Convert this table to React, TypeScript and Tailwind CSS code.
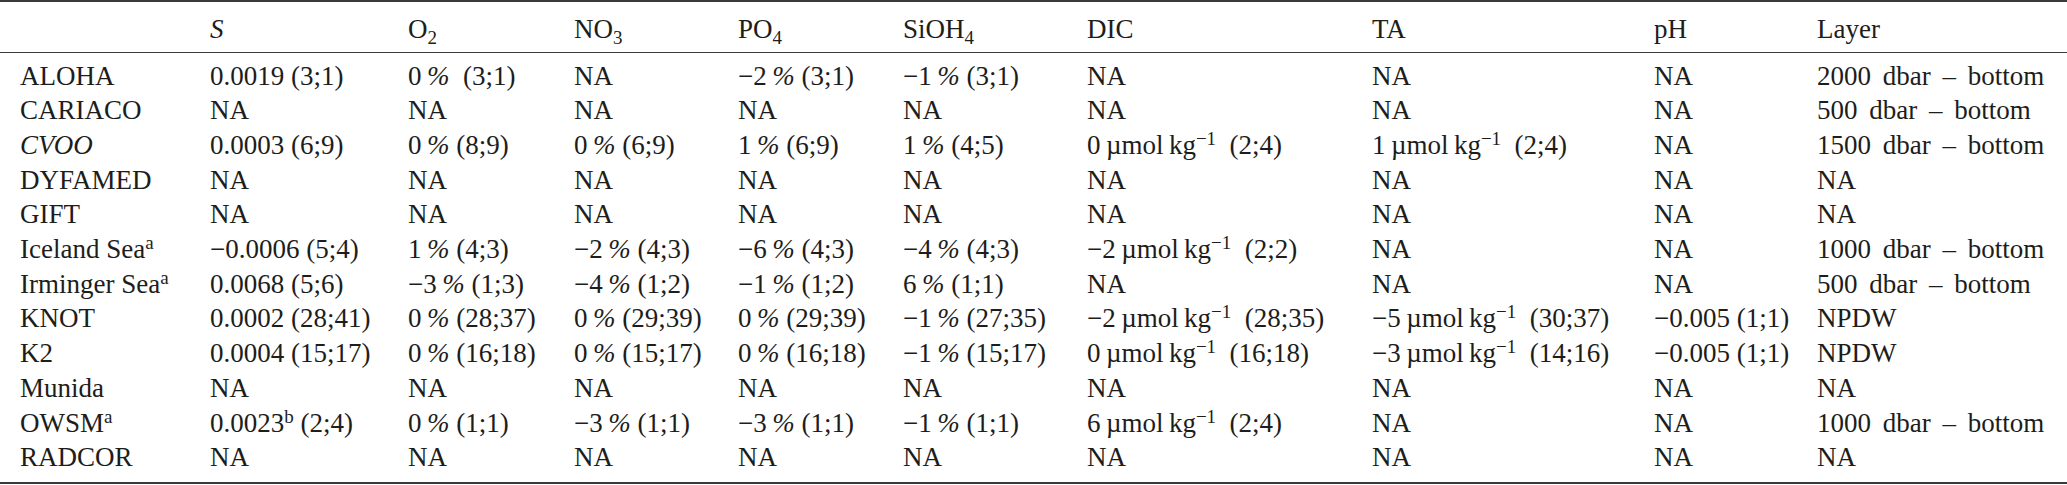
import type { ReactNode } from "react";

const cols =
  "grid grid-cols-[190px_198px_166px_164px_165px_184px_285px_282px_163px_1fr] pl-[20px]";

function Sub({ children }: { children: ReactNode }) {
  return <span className="text-[19px] leading-none align-[-6px]">{children}</span>;
}

function Sup({ children }: { children: ReactNode }) {
  return <span className="text-[19px] leading-none align-[9px]">{children}</span>;
}

const NA = "NA";
const pct = (v: string, n: string) => (
  <>
    {v}
    {"\u2009"}
    <i>%</i> ({n})
  </>
);
const umol = (v: string, n: string) => (
  <>
    {v}
    {"\u2009"}µmol{"\u2009"}kg<Sup>−1</Sup>
    {"\u2002"}({n})
  </>
);
const layer = (d: string) => <span className="[word-spacing:5px]">{d} dbar – bottom</span>;

const header: ReactNode[] = [
  "",
  <i>S</i>,
  <>
    O<Sub>2</Sub>
  </>,
  <>
    NO<Sub>3</Sub>
  </>,
  <>
    PO<Sub>4</Sub>
  </>,
  <>
    SiOH<Sub>4</Sub>
  </>,
  "DIC",
  "TA",
  "pH",
  "Layer",
];

const rows: ReactNode[][] = [
  [
    "ALOHA",
    "0.0019 (3;1)",
    <>
      0{"\u2009"}
      <i>%</i>
      {"\u2002"}(3;1)
    </>,
    NA,
    pct("−2", "3;1"),
    pct("−1", "3;1"),
    NA,
    NA,
    NA,
    layer("2000"),
  ],
  ["CARIACO", NA, NA, NA, NA, NA, NA, NA, NA, layer("500")],
  [
    <i>CVOO</i>,
    "0.0003 (6;9)",
    pct("0", "8;9"),
    pct("0", "6;9"),
    pct("1", "6;9"),
    pct("1", "4;5"),
    umol("0", "2;4"),
    umol("1", "2;4"),
    NA,
    layer("1500"),
  ],
  ["DYFAMED", NA, NA, NA, NA, NA, NA, NA, NA, NA],
  ["GIFT", NA, NA, NA, NA, NA, NA, NA, NA, NA],
  [
    <>
      Iceland Sea<Sup>a</Sup>
    </>,
    "−0.0006 (5;4)",
    pct("1", "4;3"),
    pct("−2", "4;3"),
    pct("−6", "4;3"),
    pct("−4", "4;3"),
    umol("−2", "2;2"),
    NA,
    NA,
    layer("1000"),
  ],
  [
    <>
      Irminger Sea<Sup>a</Sup>
    </>,
    "0.0068 (5;6)",
    pct("−3", "1;3"),
    pct("−4", "1;2"),
    pct("−1", "1;2"),
    pct("6", "1;1"),
    NA,
    NA,
    NA,
    layer("500"),
  ],
  [
    "KNOT",
    "0.0002 (28;41)",
    pct("0", "28;37"),
    pct("0", "29;39"),
    pct("0", "29;39"),
    pct("−1", "27;35"),
    umol("−2", "28;35"),
    umol("−5", "30;37"),
    "−0.005 (1;1)",
    "NPDW",
  ],
  [
    "K2",
    "0.0004 (15;17)",
    pct("0", "16;18"),
    pct("0", "15;17"),
    pct("0", "16;18"),
    pct("−1", "15;17"),
    umol("0", "16;18"),
    umol("−3", "14;16"),
    "−0.005 (1;1)",
    "NPDW",
  ],
  ["Munida", NA, NA, NA, NA, NA, NA, NA, NA, NA],
  [
    <>
      OWSM<Sup>a</Sup>
    </>,
    <>
      0.0023<Sup>b</Sup> (2;4)
    </>,
    pct("0", "1;1"),
    pct("−3", "1;1"),
    pct("−3", "1;1"),
    pct("−1", "1;1"),
    umol("6", "2;4"),
    NA,
    NA,
    layer("1000"),
  ],
  ["RADCOR", NA, NA, NA, NA, NA, NA, NA, NA, NA],
];

export default function App() {
  return (
    <div className="w-[2067px] h-[485px] bg-white text-[#1d1d1b] font-['Liberation_Serif','Times_New_Roman',serif] text-[27px] leading-[34.7px]">
      <div className="border-t-2 border-b-2 border-[#3a3a3a]">
        <div className={`${cols} pt-[10px] pb-[5px] border-b border-[#3a3a3a]`}>
          {header.map((h, i) => (
            <div key={i} className="whitespace-nowrap">
              {h}
            </div>
          ))}
        </div>
        <div className="pt-[5.5px] pb-[7px]">
          {rows.map((r, ri) => (
            <div key={ri} className={cols}>
              {r.map((c, ci) => (
                <div key={ci} className="whitespace-nowrap">
                  {c}
                </div>
              ))}
            </div>
          ))}
        </div>
      </div>
    </div>
  );
}
